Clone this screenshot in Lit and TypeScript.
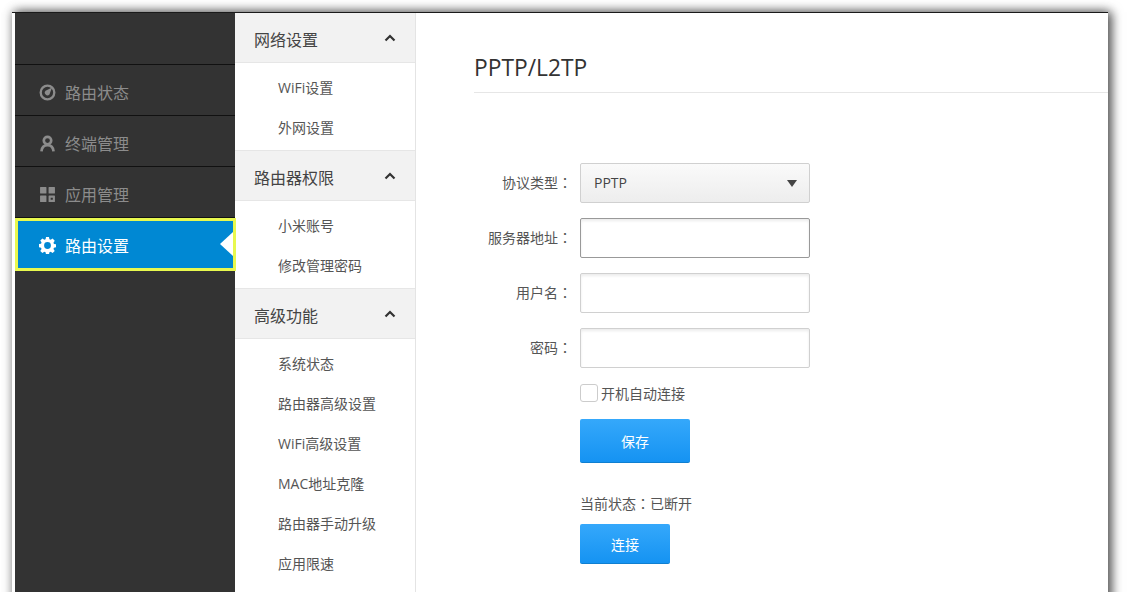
import { LitElement, html, css, svg } from "lit";
import { customElement } from "lit/decorators.js";

const icons = {
  gauge: svg`<circle cx="8" cy="8" r="6.4" fill="none" stroke="currentColor" stroke-width="2.2"/><path d="M12.300 3.200 L9.800 9.800 A2.500 2.500 0 1 1 6.200 6.300 Z" fill="currentColor"/>`,
  user: svg`<circle cx="8" cy="5.200" r="3.500" fill="none" stroke="currentColor" stroke-width="2.500"/><path d="M2.300 15.500c.3-3.700 2.200-6 5.700-6s5.400 2.300 5.700 6" fill="none" stroke="currentColor" stroke-width="2.500"/>`,
  apps: svg`<path fill="currentColor" fill-rule="evenodd" d="M1.500 1h5a.5.5 0 0 1 .5.500v5a.5.5 0 0 1-.5.500h-5a.5.5 0 0 1-.5-.500v-5a.5.5 0 0 1 .5-.500ZM9.500 1h5a.5.5 0 0 1 .5.500v5a.5.5 0 0 1-.5.500h-5a.5.5 0 0 1-.5-.500v-5a.5.5 0 0 1 .5-.500ZM1.500 9h5a.5.5 0 0 1 .5.500v5a.5.5 0 0 1-.5.500h-5a.5.5 0 0 1-.5-.500v-5a.5.5 0 0 1 .5-.500ZM9.500 9h5a.5.5 0 0 1 .5.500v5a.5.5 0 0 1-.5.500h-5a.5.5 0 0 1-.5-.500v-5a.5.5 0 0 1 .5-.500ZM11 11v2h2v-2z"/>`,
  gear: svg`<path fill="currentColor" fill-rule="evenodd" d="M6.600.5h2.800l.4 2.100 1.200.5 1.800-1.200 2 2-1.200 1.800.5 1.200 2.100.4v2.800l-2.100.4-.5 1.200 1.200 1.800-2 2-1.800-1.200-1.200.5-.4 2.100H6.600l-.4-2.100-1.200-.5-1.800 1.200-2-2 1.200-1.800-.5-1.200L-.2 9.900V7.100l2.100-.4.500-1.200L1.200 3.700l2-2L5 2.900l1.200-.5ZM8 5.200a3.200 3.200 0 1 0 0 6.400 3.200 3.200 0 0 0 0-6.400Z" transform="translate(0 -.4)"/>`,
};

const nav = [
  { label: "路由状态", icon: icons.gauge },
  { label: "终端管理", icon: icons.user },
  { label: "应用管理", icon: icons.apps },
  { label: "路由设置", icon: icons.gear, active: true },
];

const groups = [
  { title: "网络设置", items: ["WiFi设置", "外网设置"] },
  { title: "路由器权限", items: ["小米账号", "修改管理密码"] },
  { title: "高级功能", items: ["系统状态", "路由器高级设置", "WiFi高级设置", "MAC地址克隆", "路由器手动升级", "应用限速"] },
];

const colon = html`<span class="colon">：</span>`;

@customElement("app-root")
export class AppRoot extends LitElement {
  static styles = css`
    :host {
      display: block;
      height: 592px;
      overflow: hidden;
      background: #fff;
      font-family: "Open Sans", "Noto Sans CJK SC", sans-serif;
      color: #333;
    }
    .stage { height: 592px; padding: 12px 20px 0 12px; box-sizing: border-box; background: #fff; }
    .window {
      height: 620px; display: flex; background: #fff; padding-left: 3px;
      border-top: 1px solid #1a1a1a;
      box-shadow: 4px 0 10px rgba(0,0,0,.6), 0 -1px 10px rgba(0,0,0,.3);
    }
    .side { width: 220px; flex: none; background: #333; }
    .brand { height: 52px; box-sizing: border-box; border-bottom: 1px solid #111; }
    .nav {
      height: 51px; box-sizing: border-box; border-bottom: 1px solid #111;
      display: flex; align-items: center; gap: 9px; padding: 4px 0 0 24px;
      color: #8c8c8c; font-size: 16px; position: relative;
    }
    .nav svg { width: 17px; height: 17px; flex: none; margin-top: 1px; }
    .nav.active {
      width: 221px; height: 53px; background: #0088d3; color: #fff; border: 3px solid #e8f84e;
      padding: 1px 0 0 21px; position: relative; z-index: 1;
    }
    .arrow {
      position: absolute; right: 0; top: 11px; width: 0; height: 0;
      border: 12px solid transparent; border-left: 0; border-right: 13px solid #fff;
    }
    .menu { width: 181px; flex: none; box-sizing: border-box; border-right: 1px solid #e4e4e4; }
    .ghead {
      height: 50px; box-sizing: border-box; background: #f2f2f2;
      border-bottom: 1px solid #e6e6e6;
      display: flex; align-items: center; justify-content: space-between;
      padding: 2px 19px 0 19px; font-size: 16px; color: #444;
    }
    .ghead svg { width: 12px; height: 8px; margin-bottom: 1px; }
    .items { padding: 4px 0 3px; border-bottom: 1px solid #e6e6e6; }
    .items.last { border-bottom: 0; }
    .item { height: 40px; display: flex; align-items: center; padding-left: 43px; font-size: 14px; color: #555; }
    .main { flex: 1; padding: 0 0 0 58px; min-width: 0; }
    h1 {
      margin: 0; height: 80px; box-sizing: border-box; padding-top: 37px;
      font-size: 22.800px; font-weight: 400; line-height: 36px; color: #333;
      border-bottom: 1px solid #e6e6e6;
    }
    form { padding: 70px 0 0 0; }
    .row { display: flex; align-items: center; height: 40px; margin-bottom: 15px; }
    .row label { width: 98px; margin-right: 8px; padding-bottom: 2px; text-align: right; font-size: 14px; color: #555; white-space: nowrap; }
    .colon { font-family: "Noto Sans CJK TC", sans-serif; }
    .field {
      width: 230px; height: 40px; box-sizing: border-box; border: 1px solid #d0d0d0; border-radius: 2px;
      background: #fff; box-shadow: inset 0 2px 3px rgba(0,0,0,.08);
    }
    .field.focus { border-color: #999; }
    .select {
      display: flex; align-items: center; justify-content: space-between; padding: 0 12px 2px 13px;
      background: linear-gradient(#fafafa, #ededed); font-size: 14px; color: #444; box-shadow: none;
    }
    .caret { width: 0; height: 0; border: 5px solid transparent; border-top: 7px solid #444; border-bottom: 0; margin-top: 2px; }
    .below { padding-left: 106px; }
    .check { display: flex; align-items: center; gap: 3px; font-size: 14px; color: #555; height: 20px; }
    .box { width: 18px; height: 18px; box-sizing: border-box; border: 1px solid #ccc; border-radius: 3px; background: #fff; }
    .btn {
      display: flex; align-items: center; justify-content: center;
      border: 0; border-bottom: 1px solid #0f7fd0; border-radius: 2px; padding: 0; color: #fff; font: inherit; font-size: 14px;
      background: linear-gradient(#35a8fb, #1593f2);
    }
    .save { width: 110px; height: 44px; margin-top: 16px; }
    .status { font-size: 14px; color: #555; margin-top: 30px; height: 20px; line-height: 20px; }
    .connect { width: 90px; height: 40px; margin-top: 11px; }
  `;

  render() {
    return html`<div class="stage"><div class="window">
      <aside class="side">
        <div class="brand"></div>
        ${nav.map((n) => html`<div class="nav ${n.active ? "active" : ""}">
          <svg viewBox="0 0 16 16">${n.icon}</svg><span>${n.label}</span>
          ${n.active ? html`<i class="arrow"></i>` : ""}
        </div>`)}
      </aside>
      <nav class="menu">
        ${groups.map((g, i) => html`
          <div class="ghead"><span>${g.title}</span>
            <svg viewBox="0 0 12 8"><path d="M1.500 6.500 6 2l4.500 4.500" fill="none" stroke="#333" stroke-width="2.200"/></svg>
          </div>
          <div class="items ${i === 2 ? "last" : ""}">${g.items.map((t) => html`<div class="item">${t}</div>`)}</div>
        `)}
      </nav>
      <main class="main">
        <h1>PPTP/L2TP</h1>
        <form>
          <div class="row"><label>协议类型${colon}</label><div class="field select"><span>PPTP</span><i class="caret"></i></div></div>
          <div class="row"><label>服务器地址${colon}</label><div class="field focus"></div></div>
          <div class="row"><label>用户名${colon}</label><div class="field"></div></div>
          <div class="row"><label>密码${colon}</label><div class="field"></div></div>
          <div class="below">
            <div class="check"><i class="box"></i><span>开机自动连接</span></div>
            <button type="button" class="btn save">保存</button>
            <div class="status">当前状态${colon}已断开</div>
            <button type="button" class="btn connect">连接</button>
          </div>
        </form>
      </main>
    </div></div>`;
  }
}
